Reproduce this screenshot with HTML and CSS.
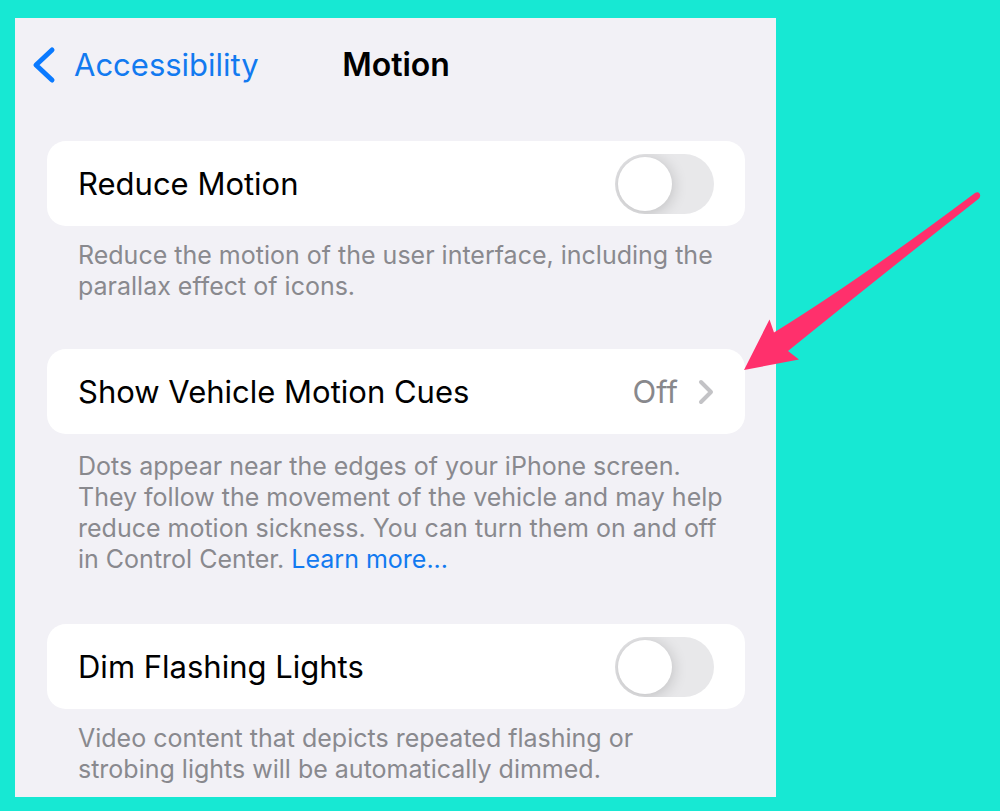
FILE: index.html
```html
<!DOCTYPE html>
<html lang="en">
<head>
<meta charset="utf-8">
<meta name="viewport" content="width=device-width, initial-scale=1">
<title>Motion</title>
<link rel="stylesheet" href="styles.css">
</head>
<body>
<main class="panel">
  <header class="nav">
    <a class="back" href="#accessibility">
      <svg class="back-icon" viewBox="0 0 24 38" aria-hidden="true"><path d="M20 4 4 19 20 34"/></svg>
      <span>Accessibility</span>
    </a>
    <h1 class="title">Motion</h1>
  </header>
  <div class="settings">
    <section>
      <div class="card">
        <label for="reduce">Reduce Motion</label>
        <input class="switch" id="reduce" type="checkbox" role="switch">
      </div>
      <p class="note">Reduce the motion of the user interface, including the parallax effect of icons.</p>
    </section>
    <section>
      <div class="callout">
        <button class="card" type="button">
          <span>Show Vehicle Motion Cues</span>
          <span class="value">Off
            <svg class="more-icon" viewBox="0 0 16 26" aria-hidden="true"><path d="M3 3 13 13 3 23"/></svg>
          </span>
        </button>
        <svg class="arrow" viewBox="0 0 238 180" aria-hidden="true"><path d="M0 178 25.5 127.500 30 140.500Q115 88 231 1C235-1.500 238 3 235 6.500Q128 91 44 159L55 167.500Z"/></svg>
      </div>
      <p class="note note-linked">Dots appear near the edges of your iPhone screen. They follow the movement of the vehicle and may help reduce motion sickness. You can turn them on and off in Control Center. <a href="#learn">Learn more...</a></p>
    </section>
    <section>
      <div class="card">
        <label for="dim">Dim Flashing Lights</label>
        <input class="switch" id="dim" type="checkbox" role="switch">
      </div>
      <p class="note">Video content that depicts repeated flashing or strobing lights will be automatically dimmed.</p>
    </section>
  </div>
</main>
</body>
</html>
```
FILE: styles.css
```css
* { box-sizing: border-box; }

body {
  margin: 0;
  padding: 18px 224px 14px 15px;
  background: #17e8d3;
  font-family: Inter, "Liberation Sans", sans-serif;
  font-size: 31px;
  line-height: 40px;
  color: #000;
}

.panel {
  padding: 27px 31px 12px 32px;
  background: #f2f1f6;
}

.nav {
  display: grid;
  grid-template-columns: 1fr auto 1fr;
  align-items: center;
  margin-bottom: 56px;
}

.back {
  display: flex;
  align-items: center;
  gap: 18px;
  margin-left: -15px;
  color: #127af0;
  text-decoration: none;
}

.back-icon {
  width: 24px;
  height: 38px;
  fill: none;
  stroke: #0a7aff;
  stroke-width: 5;
  stroke-linecap: round;
  stroke-linejoin: round;
}

.title {
  margin: 0;
  font-size: 32px;
  font-weight: 600;
}

.settings {
  display: flex;
  flex-direction: column;
  gap: 47px;
}

.card {
  display: flex;
  align-items: center;
  justify-content: space-between;
  width: 100%;
  min-height: 85px;
  padding: 12px 31px;
  border: 0;
  border-radius: 19px;
  background: #fff;
  color: inherit;
  font: inherit;
  text-align: left;
}

.switch {
  appearance: none;
  display: flex;
  width: 99px;
  height: 60px;
  margin: 0;
  padding: 3px;
  border-radius: 30px;
  background: #e8e8ea;
  overflow: hidden;
}

.switch::before {
  content: "";
  width: 54px;
  height: 54px;
  border-radius: 50%;
  background: #fff;
  box-shadow: 0 2px 16px rgb(0 0 0 / 20%);
}

.switch:checked {
  justify-content: flex-end;
  background: #34c759;
}

.value {
  display: flex;
  align-items: center;
  gap: 20px;
  color: #88888c;
}

.more-icon {
  width: 16px;
  height: 26px;
  fill: none;
  stroke: #c3c3c6;
  stroke-width: 4;
  stroke-linecap: round;
  stroke-linejoin: round;
}

.callout { position: relative; }

.arrow {
  position: absolute;
  left: calc(100% - 1px);
  bottom: 62px;
  width: 238px;
  height: 180px;
  fill: #ff306c;
  pointer-events: none;
}

.note {
  margin: 0;
  padding: 14px 18px 0 31px;
  font-size: 25px;
  line-height: 31px;
  color: #89898e;
}

.note-linked {
  padding-top: 17px;
  padding-bottom: 2px;
}

.note a {
  color: #127af0;
  text-decoration: none;
}
```
